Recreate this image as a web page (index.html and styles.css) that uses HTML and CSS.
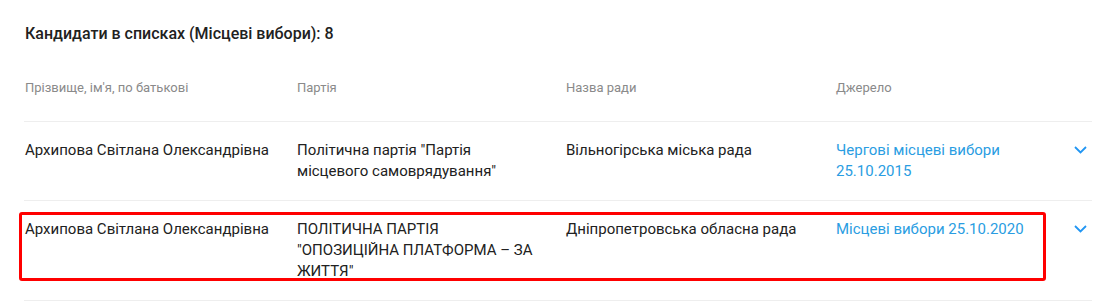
FILE: index.html
```html
<!DOCTYPE html>
<html lang="uk">
<head>
<meta charset="utf-8">
<link rel="stylesheet" href="styles.css">
</head>
<body>
<div class="page">
  <h2 class="title">Кандидати в списках (Місцеві вибори): 8</h2>
  <div class="table">
    <div class="row head">
      <div class="cell name">Прізвище, ім'я, по батькові</div>
      <div class="cell">Партія</div>
      <div class="cell">Назва ради</div>
      <div class="cell">Джерело</div>
      <div class="cell"></div>
    </div>
    <div class="row">
      <div class="cell name">Архипова Світлана Олександрівна</div>
      <div class="cell party">Політична партія "Партія місцевого самоврядування"</div>
      <div class="cell">Вільногірська міська рада</div>
      <div class="cell src"><a class="link" href="#">Чергові місцеві вибори 25.10.2015</a></div>
      <div class="cell chev"><svg width="13" height="8" viewBox="0 0 13 8"><path d="M1 1 L6.5 6.5 L12 1" fill="none" stroke="#2196f3" stroke-width="1.8"/></svg></div>
    </div>
    <div class="row marked">
      <div class="cell name">Архипова Світлана Олександрівна</div>
      <div class="cell party">ПОЛІТИЧНА ПАРТІЯ "ОПОЗИЦІЙНА ПЛАТФОРМА – ЗА ЖИТТЯ"</div>
      <div class="cell">Дніпропетровська обласна рада</div>
      <div class="cell src"><a class="link" href="#">Місцеві вибори 25.10.2020</a></div>
      <div class="cell chev"><svg width="13" height="8" viewBox="0 0 13 8"><path d="M1 1 L6.5 6.5 L12 1" fill="none" stroke="#2196f3" stroke-width="1.8"/></svg></div>
      <div class="highlight"></div>
    </div>
  </div>
</div>
</body>
</html>
```
FILE: styles.css
```css
html, body {
  margin: 0;
  padding: 0;
  background: #fff;
}
.page {
  padding: 24px 8px 0 24px;
  font-family: Roboto, "Noto Sans", sans-serif;
  color: #212121;
}
.title {
  margin: 0;
  padding-left: 1px;
  font-size: 16px;
  font-weight: 500;
  line-height: 20px;
  color: #212121;
}
.table {
  margin-top: 36px;
}
.row {
  display: grid;
  grid-template-columns: 272px 269px 270px 213px 44px;
  border-bottom: 1px solid #eeeeee;
  padding: 18px 0;
  font-size: 15px;
  line-height: 21px;
  position: relative;
}
.row.head {
  padding: 0 0 25px;
  font-size: 13px;
  line-height: 16px;
  color: #8a8a8a;
}
.cell {
  padding-left: 1px;
  padding-right: 30px;
  box-sizing: border-box;
}
.cell.name {
  padding-right: 8px;
}
.src {
  padding-right: 16px;
}
.chev {
  padding: 6px 0 0 0;
  display: flex;
  align-items: flex-start;
}
.chev svg {
  display: block;
  margin-left: 26px;
}
.link {
  color: #2a9de2;
  text-decoration: none;
}
.highlight {
  position: absolute;
  left: -5px;
  top: 11px;
  width: 1027px;
  height: 69px;
  border: 3px solid #ff0000;
  border-radius: 3px;
  box-sizing: border-box;
  pointer-events: none;
}
```
